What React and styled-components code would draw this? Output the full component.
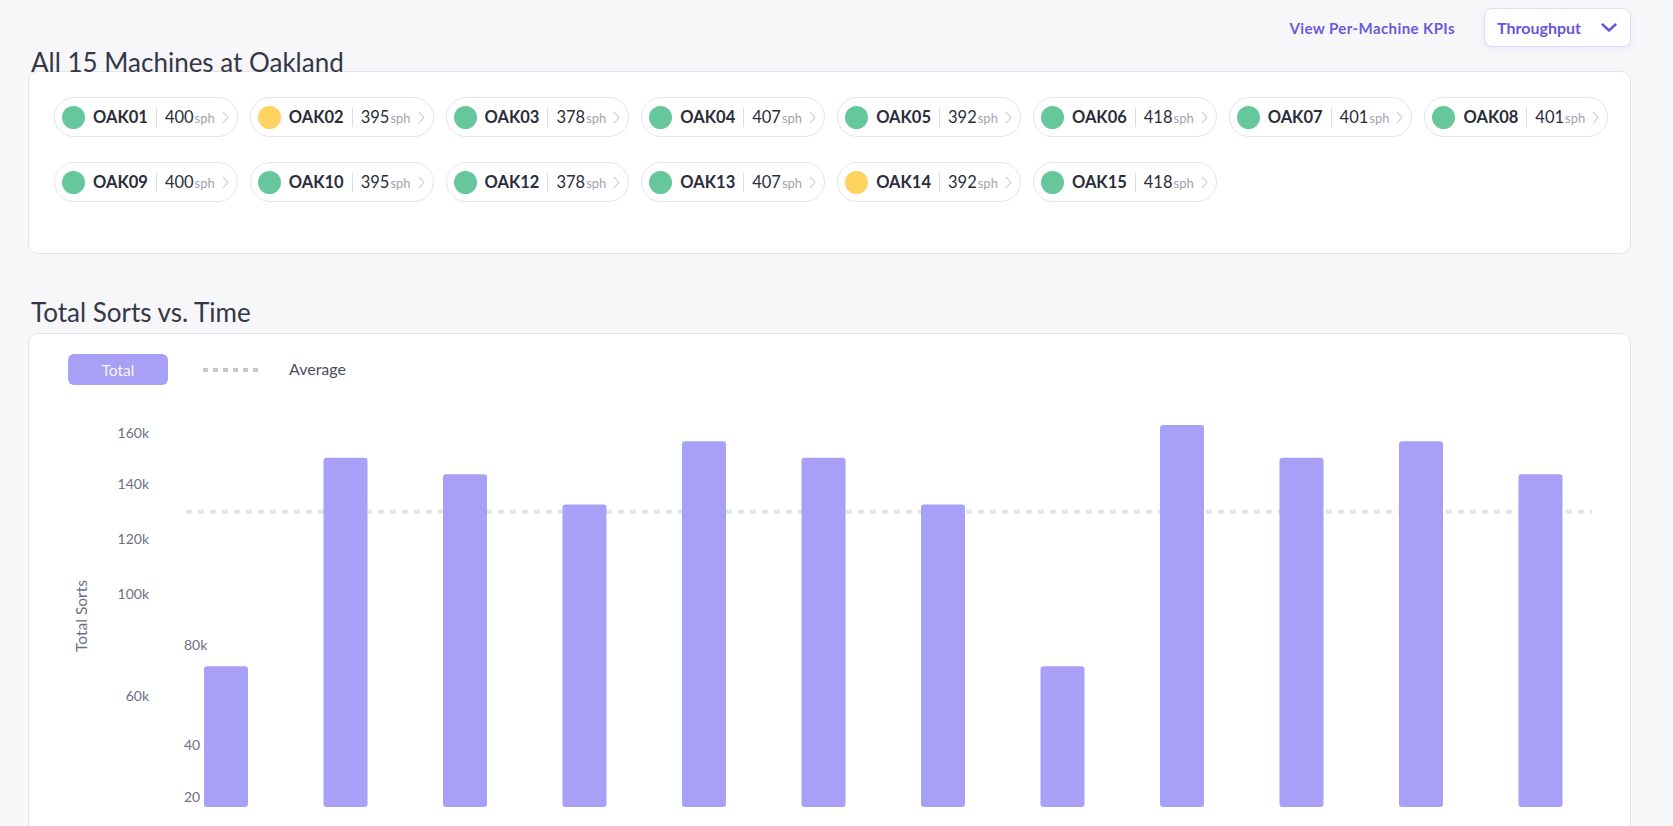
import React from 'react';
import styled, { createGlobalStyle } from 'styled-components';

const GlobalStyle = createGlobalStyle`
    * {
        box-sizing: border-box;
    }
    body {
        margin: 0;
        background: #f7f7fa;
        font-family: Lato, "Open Sans", sans-serif;
        color: #2c2f3c;
    }
`;

const machines = [
    { name: 'OAK01', sph: 400, status: 'ok' },
    { name: 'OAK02', sph: 395, status: 'warn' },
    { name: 'OAK03', sph: 378, status: 'ok' },
    { name: 'OAK04', sph: 407, status: 'ok' },
    { name: 'OAK05', sph: 392, status: 'ok' },
    { name: 'OAK06', sph: 418, status: 'ok' },
    { name: 'OAK07', sph: 401, status: 'ok' },
    { name: 'OAK08', sph: 401, status: 'ok' },
    { name: 'OAK09', sph: 400, status: 'ok' },
    { name: 'OAK10', sph: 395, status: 'ok' },
    { name: 'OAK12', sph: 378, status: 'ok' },
    { name: 'OAK13', sph: 407, status: 'ok' },
    { name: 'OAK14', sph: 392, status: 'warn' },
    { name: 'OAK15', sph: 418, status: 'ok' },
];

// total sorts per period, in thousands
const sorts = [60, 149, 142, 129, 156, 149, 129, 60, 163, 149, 156, 142];
const average = 126;

const Page = styled.div`
    padding: 8px 42px 0 28px;
    height: 826px;
    overflow: hidden;
`;

const TopBar = styled.div`
    display: flex;
    justify-content: flex-end;
    align-items: center;
    gap: 29px;
    height: 39px;
`;

const KpiLink = styled.a`
    font-size: 15px;
    font-weight: 700;
    letter-spacing: 0.4px;
    color: #6a5bd9;
    text-decoration: none;
    cursor: pointer;
`;

const Dropdown = styled.button`
    display: flex;
    align-items: center;
    justify-content: space-between;
    width: 147px;
    height: 39px;
    padding: 0 13px 0 12px;
    background: #ffffff;
    border: 1px solid #dedaf7;
    border-radius: 8px;
    box-shadow: 0 2px 6px rgba(106, 91, 217, 0.1);
    font-family: inherit;
    font-size: 16px;
    font-weight: 700;
    color: #6656d8;
    cursor: pointer;
`;

const SectionTitle = styled.h2`
    margin: ${(p) => p.$top}px 0 ${(p) => p.$bottom}px 3px;
    font-size: 26px;
    line-height: 26px;
    font-weight: 400;
    color: #343846;
    position: relative;
`;

const Card = styled.section`
    background: #ffffff;
    border: 1px solid #e3e3eb;
    border-radius: 10px;
    min-height: ${(p) => p.$minHeight}px;
`;

const ChipGrid = styled.div`
    display: flex;
    flex-wrap: wrap;
    gap: 25px 12px;
    padding: 25px 0 49px 25px;
`;

const Chip = styled.button`
    display: flex;
    align-items: center;
    height: 40px;
    padding: 0 8px 0 7px;
    background: #ffffff;
    border: 1.5px solid #e4e4ec;
    border-radius: 20px;
    font-family: inherit;
    color: #2a2d3a;
    cursor: pointer;
`;

const Dot = styled.span`
    width: 23px;
    height: 23px;
    border-radius: 50%;
    background: ${(p) => (p.$status === 'warn' ? '#ffd35f' : '#67c79c')};
    margin-right: 8px;
`;

const ChipName = styled.span`
    font-size: 16.5px;
    font-weight: 700;
`;

const Divider = styled.span`
    width: 1px;
    height: 19px;
    background: #dcdce4;
    margin: 0 8px;
`;

const ChipValue = styled.span`
    font-size: 16.5px;
    font-weight: 400;
    display: flex;
    align-items: baseline;

    small {
        font-size: 13px;
        color: #a2a4b2;
        margin-left: 1px;
    }
`;

const ChipChevron = styled.svg`
    margin-left: 7px;
`;

const LegendRow = styled.div`
    display: flex;
    align-items: center;
    padding: 20px 39px 0;
    height: 51px;
`;

const LegendButton = styled.button`
    width: 100px;
    height: 31px;
    border: none;
    border-radius: 6px;
    background: #a89ff7;
    font-family: inherit;
    font-size: 15.5px;
    color: #f6f5ff;
    cursor: pointer;
`;

const DashSwatch = styled.span`
    width: 58px;
    height: 4px;
    margin: 0 28px 0 35px;
    background: repeating-linear-gradient(to right, #c5c7d1 0 5px, transparent 5px 10px);
`;

const LegendLabel = styled.span`
    font-size: 16px;
    color: #4b4e5c;
    margin-top: -3px;
`;

const ChartSvg = styled.svg`
    display: block;
    margin-top: 10px;

    text {
        font-family: Lato, "Open Sans", sans-serif;
        font-size: 14px;
        fill: #6d7080;
    }
`;

const ticks = [
    { label: '160k', x: 120, y: 37, anchor: 'end' },
    { label: '140k', x: 120, y: 88, anchor: 'end' },
    { label: '120k', x: 120, y: 143, anchor: 'end' },
    { label: '100k', x: 120, y: 198, anchor: 'end' },
    { label: '80k', x: 155, y: 249, anchor: 'start' },
    { label: '60k', x: 120, y: 300, anchor: 'end' },
    { label: '40', x: 155, y: 349, anchor: 'start' },
    { label: '20', x: 155, y: 401, anchor: 'start' },
];

const BASE = 412;
const SCALE = 2.344;

const SortsChart = () => (
    <ChartSvg width="1601" height="440" viewBox="0 0 1601 440">
        <text
            x="0"
            y="0"
            transform="translate(52 221) rotate(-90)"
            textAnchor="middle"
            dominantBaseline="central"
            style={{ fontSize: 15.5 }}
        >
            Total Sorts
        </text>
        {ticks.map((t) => (
            <text key={t.label} x={t.x} y={t.y} textAnchor={t.anchor} dominantBaseline="central">
                {t.label}
            </text>
        ))}
        <line
            x1="157"
            x2="1563"
            y1={BASE - average * SCALE}
            y2={BASE - average * SCALE}
            stroke="#e3e3eb"
            strokeWidth="4"
            strokeDasharray="6 6"
        />
        {sorts.map((v, i) => {
            const h = v * SCALE;
            return (
                <rect key={i} x={175 + i * 119.5} y={BASE - h} width="44" height={h} rx="3" fill="#a89ff7" />
            );
        })}
    </ChartSvg>
);

const MachineChip = ({ name, sph, status }) => (
    <Chip>
        <Dot $status={status} />
        <ChipName>{name}</ChipName>
        <Divider />
        <ChipValue>
            {sph}
            <small>sph</small>
        </ChipValue>
        <ChipChevron width="7" height="13" viewBox="0 0 7 13">
            <polyline points="1,1 6,6.5 1,12" fill="none" stroke="#d3d4dd" strokeWidth="1.2" />
        </ChipChevron>
    </Chip>
);

const App = () => {
    return (
        <Page>
            <GlobalStyle />
            <TopBar>
                <KpiLink>View Per-Machine KPIs</KpiLink>
                <Dropdown>
                    Throughput
                    <svg width="16" height="9" viewBox="0 0 16 9">
                        <polyline
                            points="1.5,1.5 8,7.5 14.5,1.5"
                            fill="none"
                            stroke="#6656d8"
                            strokeWidth="2.4"
                            strokeLinecap="round"
                            strokeLinejoin="round"
                        />
                    </svg>
                </Dropdown>
            </TopBar>

            <SectionTitle $top={2} $bottom={-4}>All 15 Machines at Oakland</SectionTitle>
            <Card $minHeight={183}>
                <ChipGrid>
                    {machines.map((m) => (
                        <MachineChip key={m.name} {...m} />
                    ))}
                </ChipGrid>
            </Card>

            <SectionTitle $top={45} $bottom={8}>Total Sorts vs. Time</SectionTitle>
            <Card $minHeight={520}>
                <LegendRow>
                    <LegendButton>Total</LegendButton>
                    <DashSwatch />
                    <LegendLabel>Average</LegendLabel>
                </LegendRow>
                <SortsChart />
            </Card>
        </Page>
    );
};

export default App;
